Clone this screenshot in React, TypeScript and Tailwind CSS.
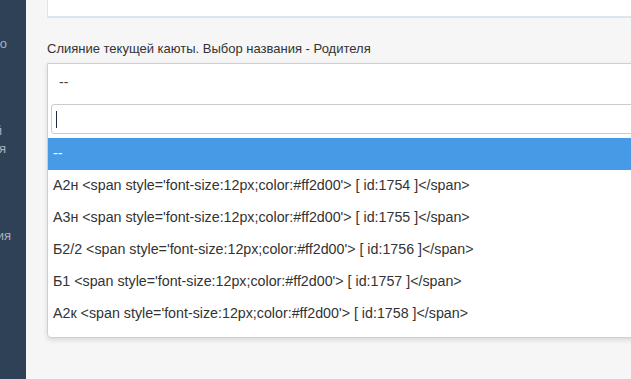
import { FC } from 'react'

const options = [
  { name: 'А2н', id: 1754 },
  { name: 'А3н', id: 1755 },
  { name: 'Б2/2', id: 1756 },
  { name: 'Б1', id: 1757 },
  { name: 'А2к', id: 1758 },
]

const NavTail: FC<{ text: string; w: string; mt: string }> = ({ text, w, mt }) => (
  <div className={`flex justify-end whitespace-nowrap h-[18px] leading-[18px] ${w} ${mt}`}>
    {text}
  </div>
)

const App: FC = () => {
  return (
    <div className="flex h-[379px] w-[631px] overflow-hidden bg-[#f6f6f6] font-['Liberation_Sans',Arial,sans-serif]">
      {/* sidebar (only its right edge is visible) */}
      <aside className="w-[26px] shrink-0 overflow-hidden bg-[#2f4156] text-[13px] text-[#a7b1c2]">
        <NavTail text="Общая инфо" w="w-[7px]" mt="mt-[35px]" />
        <NavTail text="Текущий" w="w-[2px]" mt="mt-[69px]" />
        <NavTail text="Категория" w="w-[6px]" mt="mt-0" />
        <NavTail text="Конфигурация" w="w-[11px]" mt="mt-[69px]" />
      </aside>

      <main className="flex-1 min-w-0 pl-[21px]">
        <div className="h-[18px] w-[620px] border-x border-b-2 border-[#dce5ee] bg-white" />

        <label className="block mt-[22px] text-[13px] leading-[18px] text-[#333]">
          Слияние текущей каюты. Выбор названия - Родителя
        </label>

        <div className="mt-[5px] w-[620px] rounded-b-[4px] border border-[#cfcfcf] bg-white pb-[7px] shadow-[0_2px_5px_rgba(0,0,0,0.12)]">
          {/* selected value */}
          <div className="flex h-[36px] items-center pl-[11px] text-[14px] text-[#444]">--</div>

          {/* search field */}
          <div className="px-[3px] py-[4px]">
            <div className="flex h-[30px] items-center rounded-[3px] border border-[#cccccc] bg-white pl-[4px]">
              <span className="h-[17px] w-[1px] bg-[#1f2a44]" />
            </div>
          </div>

          {/* results */}
          <ul className="text-[14.25px] text-[#333]">
            <li className="flex h-[32px] items-center bg-[#479be6] pl-[5px] text-white">--</li>
            {options.map((o) => (
              <li key={o.id} className="flex h-[32px] items-center whitespace-nowrap pl-[5px]">
                {`${o.name} <span style='font-size:12px;color:#ff2d00'> [ id:${o.id} ]</span>`}
              </li>
            ))}
          </ul>
        </div>
      </main>
    </div>
  )
}

export default App
